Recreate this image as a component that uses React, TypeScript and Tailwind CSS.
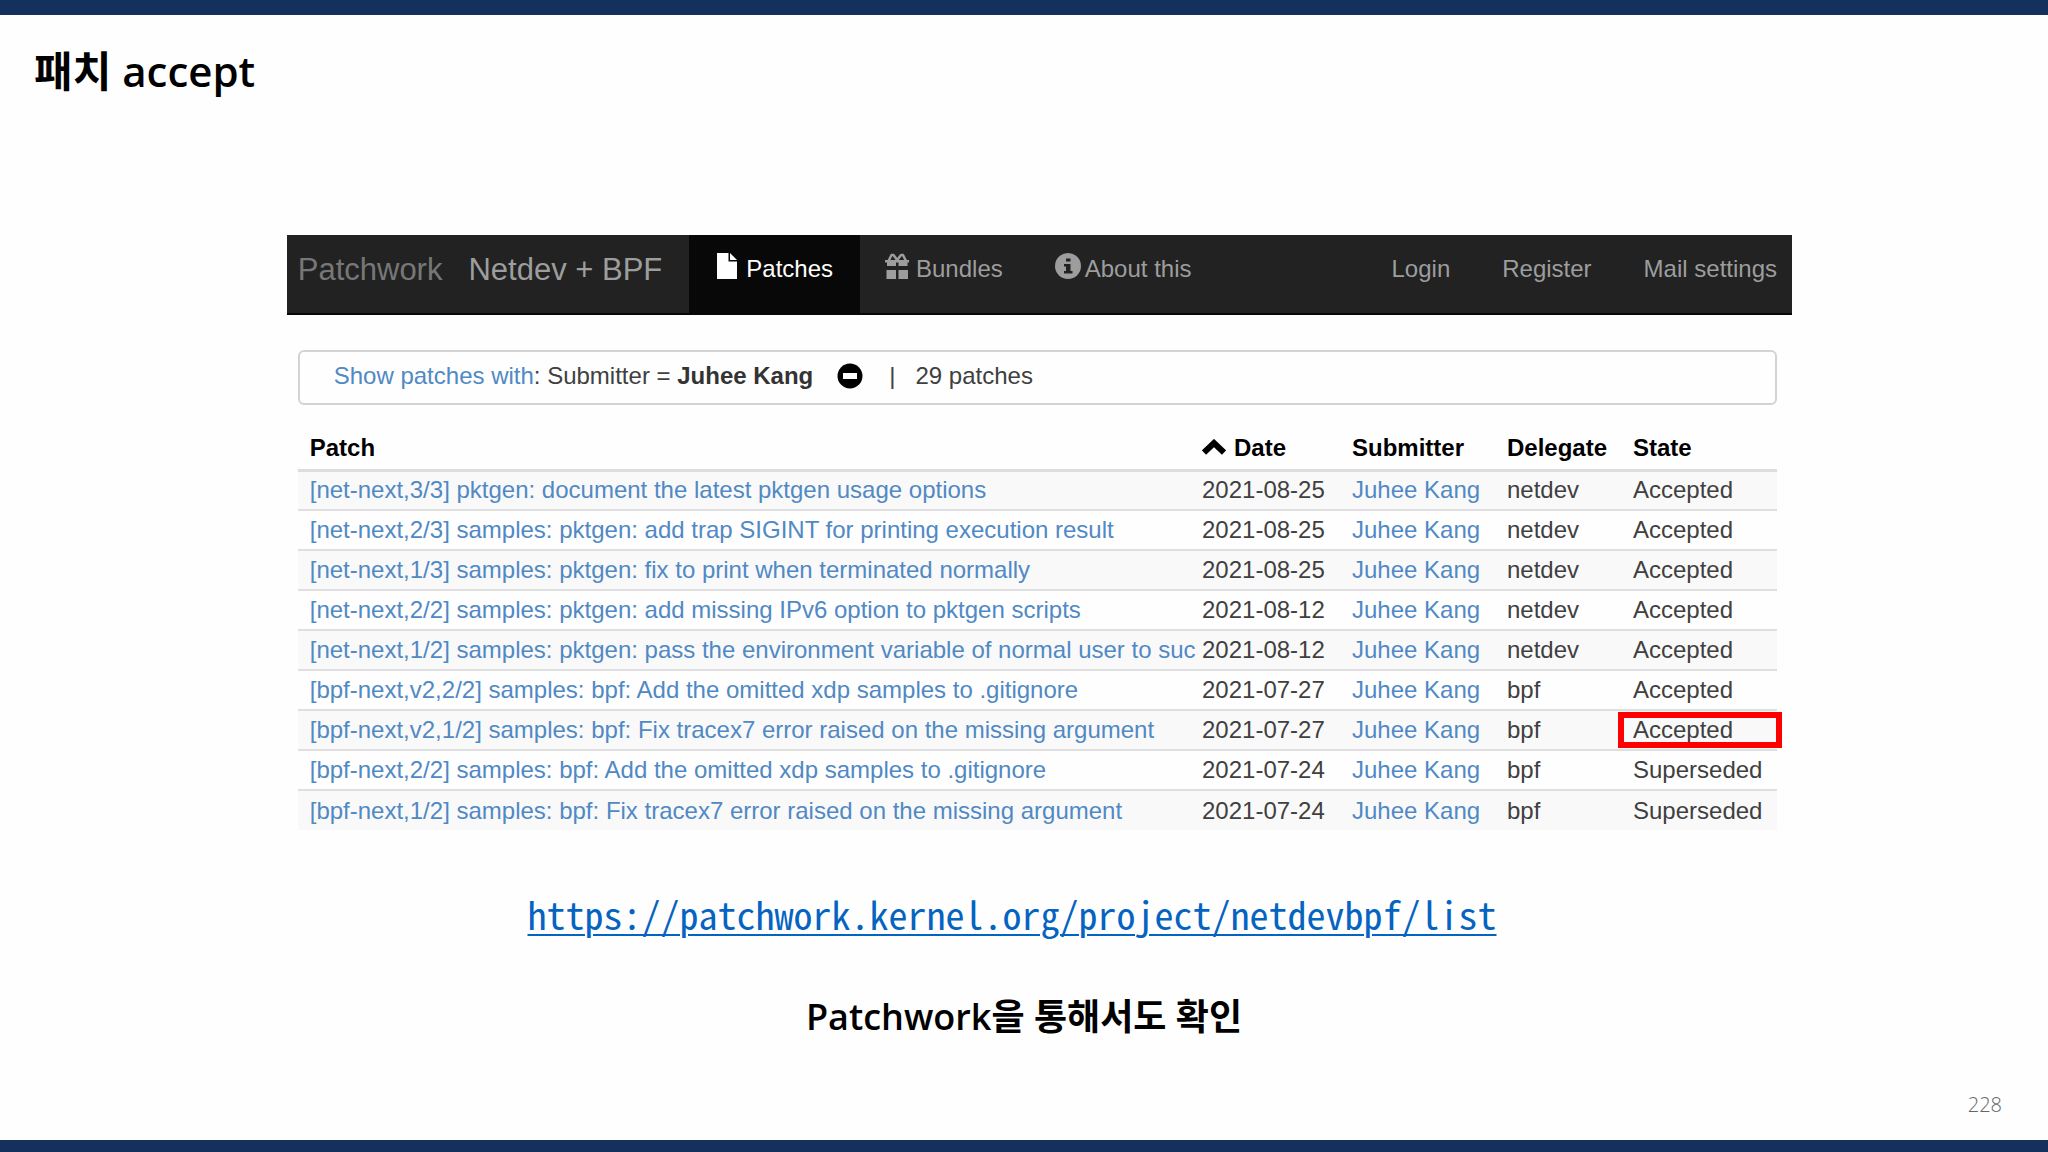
import React from "react";

const patches = [
  ["[net-next,3/3] pktgen: document the latest pktgen usage options", "2021-08-25", "netdev", "Accepted"],
  ["[net-next,2/3] samples: pktgen: add trap SIGINT for printing execution result", "2021-08-25", "netdev", "Accepted"],
  ["[net-next,1/3] samples: pktgen: fix to print when terminated normally", "2021-08-25", "netdev", "Accepted"],
  ["[net-next,2/2] samples: pktgen: add missing IPv6 option to pktgen scripts", "2021-08-12", "netdev", "Accepted"],
  ["[net-next,1/2] samples: pktgen: pass the environment variable of normal user to suc", "2021-08-12", "netdev", "Accepted"],
  ["[bpf-next,v2,2/2] samples: bpf: Add the omitted xdp samples to .gitignore", "2021-07-27", "bpf", "Accepted"],
  ["[bpf-next,v2,1/2] samples: bpf: Fix tracex7 error raised on the missing argument", "2021-07-27", "bpf", "Accepted"],
  ["[bpf-next,2/2] samples: bpf: Add the omitted xdp samples to .gitignore", "2021-07-24", "bpf", "Superseded"],
  ["[bpf-next,1/2] samples: bpf: Fix tracex7 error raised on the missing argument", "2021-07-24", "bpf", "Superseded"],
];
const highlighted = 6;

function FileIcon() {
  return (
    <svg className="h-[26px] w-5" viewBox="0 0 20 26" fill="currentColor" aria-hidden="true">
      <path d="M0 0H11.500V8.500H20V26H0Z" />
      <path d="M13 0L20 7H13Z" />
    </svg>
  );
}

function GiftIcon() {
  return (
    <svg className="h-[26px] w-6" viewBox="0 0 24 26" fill="currentColor" aria-hidden="true">
      <path d="M2 9H11V13H2ZM13.500 9H22.500V13H13.500ZM1.500 17H11V26H1.500ZM13.500 17H23V26H13.500Z" />
      <path d="M0 7H24V9.500H0Z" />
      <path d="M3.500 8L6.500 2H8.500L12.200 7L16 2H18L21 8" fill="none" stroke="currentColor" strokeWidth="2.500" strokeLinejoin="round" />
    </svg>
  );
}

function InfoIcon() {
  return (
    <svg className="size-[26px]" viewBox="0 0 26 26" aria-hidden="true">
      <circle cx="13" cy="13" r="13" fill="currentColor" />
      <path d="M11 5.500H15.500V8.500H11ZM9 11H15.500V18H17.500V20.500H9V18H11V13.500H9Z" fill="#222222" />
    </svg>
  );
}

export default function App() {
  return (
    <div className="flex min-h-screen flex-col border-t-[15px] border-b-[12px] border-[#14305c] bg-[#fefefe] font-['Liberation_Sans',Arial,sans-serif] text-2xl text-[#404040]">
      <h1 className="mt-[31px] ml-[34px] font-['Open_Sans','Noto_Sans_CJK_KR',sans-serif] text-[42px] leading-[50px] font-semibold text-black">
        패치 accept
      </h1>

      <main className="mt-[139px] mr-[12.5%] ml-[14%]">
        <nav className="flex h-20 border-b-2 border-[#080808] bg-[#222222] text-[#9d9d9d]">
          <div className="flex gap-[26px] pt-[17px] pl-[11px] text-[31px] leading-9">
            <a href="#home" className="text-[#777]">Patchwork</a>
            <a href="#project">Netdev + BPF</a>
          </div>
          <a href="#patches" className="ml-[27px] flex gap-[9px] bg-[#080808] pt-[18px] pr-[27px] pl-7 leading-8 text-white">
            <FileIcon />Patches
          </a>
          <a href="#bundles" className="ml-[25px] flex gap-[7px] pt-[18px] leading-8">
            <GiftIcon />Bundles
          </a>
          <a href="#about" className="ml-[52px] flex gap-1 pt-[18px] leading-8">
            <InfoIcon />About this
          </a>
          <div className="ml-auto flex gap-[52px] pt-[18px] pr-[15px] leading-8">
            <a href="#login">Login</a>
            <a href="#register">Register</a>
            <a href="#mail">Mail settings</a>
          </div>
        </nav>

        <div className="mr-[15px] ml-[11px]">
          <div className="mt-[35px] flex h-[55px] items-center rounded-md border-2 border-[#d3d3d7] pb-1 pl-[34px] whitespace-pre">
            <a href="#filter" className="text-[#5089c4]">Show patches with</a>
            <span>: Submitter = <strong className="text-[#333]">Juhee Kang</strong></span>
            <button type="button" aria-label="Remove submitter filter" className="ml-6 text-black">
              <svg className="size-[26px]" viewBox="0 0 26 26" aria-hidden="true">
                <circle cx="13" cy="13" r="12.500" fill="currentColor" />
                <rect x="6" y="10" width="14" height="6" fill="#fff" />
              </svg>
            </button>
            <span className="ml-[26px]">|</span>
            <span className="ml-5">29 patches</span>
          </div>

          <table className="mt-[23px] w-full table-fixed border-collapse text-left">
            <colgroup>
              <col />
              <col className="w-[150px]" />
              <col className="w-[155px]" />
              <col className="w-[126px]" />
              <col className="w-[149px]" />
            </colgroup>
            <thead>
              <tr className="h-[42px] border-b-[3px] border-[#dddde0] text-black">
                <th className="pl-3">Patch</th>
                <th className="pl-[5px]">
                  <span className="flex items-center gap-2">
                    <svg className="h-[18px] w-6" viewBox="0 0 24 18" aria-hidden="true">
                      <path d="M2 13.500L12 4L22 13.500" fill="none" stroke="currentColor" strokeWidth="6" />
                    </svg>
                    Date
                  </span>
                </th>
                <th className="pl-[5px]">Submitter</th>
                <th className="pl-[5px]">Delegate</th>
                <th className="pl-[5px]">State</th>
              </tr>
            </thead>
            <tbody>
              {patches.map(([title, date, delegate, state], i) => (
                <tr key={title} className="h-10 border-b-2 border-[#dfdfe2] leading-8 odd:bg-[#f9f9fa] last:border-b-0">
                  <td className="pl-3 whitespace-nowrap">
                    <a href="#patch" className="text-[#5089c4]">{title}</a>
                  </td>
                  <td className="pl-[5px]">{date}</td>
                  <td className="pl-[5px]"><a href="#submitter" className="text-[#5089c4]">Juhee Kang</a></td>
                  <td className="pl-[5px]">{delegate}</td>
                  <td className="relative pl-[5px]">
                    {state}
                    {i === highlighted && (
                      <span className="absolute inset-y-[1px] -right-[5px] -left-[10px] border-[6px] border-[#ff0000]" />
                    )}
                  </td>
                </tr>
              ))}
            </tbody>
          </table>
        </div>
      </main>

      <a
        href="https://patchwork.kernel.org/project/netdevbpf/list"
        className="mt-[59px] mr-6 self-center font-['Noto_Sans_Mono_CJK_KR','Liberation_Mono',monospace] text-[38px] leading-[50px] text-[#0563c1] underline decoration-2 underline-offset-4"
      >
        https://patchwork.kernel.org/project/netdevbpf/list
      </a>
      <p className="mt-[53px] text-center font-['Open_Sans','Noto_Sans_CJK_KR',sans-serif] text-[36px] leading-[50px] font-semibold text-black">
        Patchwork을 통해서도 확인
      </p>
      <p className="mt-auto mr-[46px] mb-5 text-right font-['Open_Sans','Noto_Sans',sans-serif] text-xl leading-[30px] font-light text-[#666]">
        228
      </p>
    </div>
  );
}
